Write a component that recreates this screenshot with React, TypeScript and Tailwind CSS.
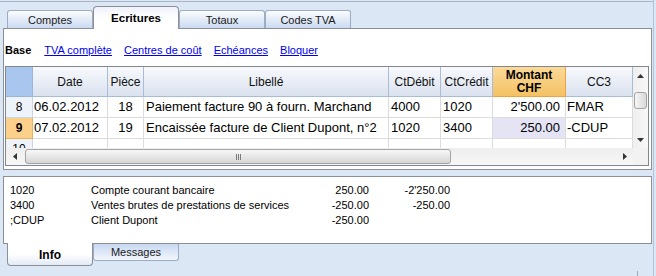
import React from "react";

const COLS = "grid grid-cols-[27px_75px_36px_245px_52px_52px_73px_67px]";

function Tri({ dir }: { dir: "up" | "down" | "left" | "right" }) {
  const pts =
    dir === "up"
      ? "0,4 7,4 3.5,0"
      : dir === "down"
      ? "0,0 7,0 3.5,4"
      : dir === "left"
      ? "4,0 4,7 0,3.5"
      : "0,0 0,7 4,3.5";
  const w = dir === "up" || dir === "down" ? 7 : 4;
  const h = dir === "up" || dir === "down" ? 4 : 7;
  return (
    <svg width={w} height={h} viewBox={`0 0 ${w} ${h}`}>
      <polygon points={pts} fill="#333" />
    </svg>
  );
}

function TopTab({ label, active }: { label: string; active?: boolean }) {
  if (active) {
    return (
      <div className="relative z-10 -mb-px flex h-[23px] w-[86px] items-start justify-center rounded-t-[4px] border border-b-0 border-[#8c8f96] bg-linear-to-b from-[#eef2fa] via-white to-white pt-[3px] text-[11.5px] font-bold text-black">
        {label}
      </div>
    );
  }
  return (
    <div className="flex h-[18px] w-[86px] items-center justify-center rounded-t-[3px] border border-b-0 border-[#9cacc4] bg-linear-to-b from-[#fbfcfe] to-[#cbdaf1] pt-[1px] text-[11px] text-[#1a1a1a]">
      {label}
    </div>
  );
}

function HeadCell({ children, className = "" }: { children?: React.ReactNode; className?: string }) {
  return (
    <div
      className={
        "flex items-center justify-center border-r border-b border-[#a7bcd7] bg-linear-to-b from-[#f8f9fc] to-[#dae2ef] text-[12px] text-[#111] " +
        className
      }
    >
      {children}
    </div>
  );
}

function Cell({ children, className = "" }: { children?: React.ReactNode; className?: string }) {
  return (
    <div className={"flex h-[21px] items-center overflow-hidden whitespace-nowrap border-r border-b border-[#dcdcdc] text-[13px] text-black " + className}>
      {children}
    </div>
  );
}

type Row = { n: string; date: string; piece: string; lib: string; deb: string; cred: string; mont: string; cc3: string };

const rows: Row[] = [
  { n: "8", date: "06.02.2012", piece: "18", lib: "Paiement facture 90 à fourn. Marchand", deb: "4000", cred: "1020", mont: "2'500.00", cc3: "FMAR" },
  { n: "9", date: "07.02.2012", piece: "19", lib: "Encaissée facture de Client Dupont, n°2", deb: "1020", cred: "3400", mont: "250.00", cc3: "-CDUP" },
];

function DataRow({ r, sel }: { r: Row; sel?: boolean }) {
  return (
    <>
      <div
        className={
          "flex h-[21px] items-center justify-center border-r border-b text-[12px] " +
          (sel ? "border-[#e8b25c] bg-[#fbd08b] font-bold" : "border-[#c9d6e8] bg-[#eef3fa]")
        }
      >
        {r.n}
      </div>
      <Cell className="pl-[1px]">{r.date}</Cell>
      <Cell className="justify-center">{r.piece}</Cell>
      <Cell className="pl-[2px]">{r.lib}</Cell>
      <Cell className="pl-[2px]">{r.deb}</Cell>
      <Cell className="pl-[2px]">{r.cred}</Cell>
      <Cell className={"justify-end pr-[5px] " + (sel ? "bg-[#e4e4f5]" : "")}>{r.mont}</Cell>
      <Cell className="pl-[1px]">{r.cc3}</Cell>
    </>
  );
}

export default function App() {
  return (
    <div className="h-[276px] w-[656px] overflow-hidden bg-[#dce7f5] font-['Liberation_Sans',Arial,sans-serif]">
      <div className="flex h-full w-[654px] flex-col border-r border-[#b3c4da]">
        <div className="h-px" />
        <div className="h-px bg-[#a9b5c6]" />
        {/* top tabs */}
        <div className="flex h-[26px] items-end pl-[7px]">
          <TopTab label="Comptes" />
          <TopTab label="Ecritures" active />
          <TopTab label="Totaux" />
          <TopTab label="Codes TVA" />
        </div>
        {/* main panel */}
        <div className="ml-[3px] flex h-[142px] w-[649px] flex-col border border-[#8c8f96] bg-white">
          <div className="flex h-[37px] items-center gap-[12px] pl-[1px] pt-[5px] text-[11px]">
            <span className="mr-px font-bold text-black">Base</span>
            <span className="text-[#0000ee] underline">TVA complète</span>
            <span className="text-[#0000ee] underline">Centres de coût</span>
            <span className="text-[#0000ee] underline">Echéances</span>
            <span className="text-[#0000ee] underline">Bloquer</span>
          </div>
          {/* grid */}
          <div className="ml-px flex h-[100px] w-[644px] flex-col border border-[#82878f]">
            <div className="flex h-[81px]">
              <div className="flex w-[627px] flex-col">
                <div className={COLS + " h-[30px]"}>
                  <div className="border-r border-b border-[#9db5d5] bg-[#a9c6ee]" />
                  <HeadCell>Date</HeadCell>
                  <HeadCell>Pièce</HeadCell>
                  <HeadCell>Libellé</HeadCell>
                  <HeadCell>CtDébit</HeadCell>
                  <HeadCell>CtCrédit</HeadCell>
                  <div className="flex flex-col items-center justify-center border-r border-b border-[#efa23e] bg-linear-to-b from-[#fbda97] to-[#f4c163] text-center text-[12px] font-bold leading-[13px] text-black">
                    <span>Montant</span>
                    <span>CHF</span>
                  </div>
                  <HeadCell>CC3</HeadCell>
                </div>
                <div className={COLS}>
                  <DataRow r={rows[0]} />
                  <DataRow r={rows[1]} sel />
                </div>
                <div className="h-[9px] overflow-hidden">
                  <div className={COLS}>
                    <div className="flex h-[21px] items-center justify-center border-r border-b border-[#c9d6e8] bg-[#eef3fa] text-[12px]">10</div>
                    <Cell />
                    <Cell />
                    <Cell />
                    <Cell />
                    <Cell />
                    <Cell />
                    <Cell />
                  </div>
                </div>
              </div>
              {/* vertical scrollbar */}
              <div className="flex w-[15px] flex-col bg-linear-to-r from-[#eeeeee] to-[#f8f8f8]">
                <div className="flex h-[17px] items-center justify-center">
                  <Tri dir="up" />
                </div>
                <div className="h-[8px]" />
                <div className="mx-px h-[17px] rounded-[3px] border border-[#a3a3a3] bg-linear-to-r from-[#f6f6f6] to-[#d9d9d9]" />
                <div className="flex-1" />
                <div className="flex h-[17px] items-center justify-center">
                  <Tri dir="down" />
                </div>
              </div>
            </div>
            {/* horizontal scrollbar */}
            <div className="flex h-[17px]">
              <div className="flex w-[627px] items-center bg-linear-to-b from-[#eeeeee] to-[#f7f7f7]">
                <div className="flex h-full w-[17px] items-center justify-center">
                  <Tri dir="left" />
                </div>
                <div className="ml-[2px] flex h-[15px] w-[426px] items-center justify-center rounded-[3px] border border-[#a3a3a3] bg-linear-to-b from-[#f8f8f8] to-[#d6d6d6]">
                  <div className="flex gap-[1px]">
                    <div className="h-[6px] w-px bg-[#7a7a7a]" />
                    <div className="h-[6px] w-px bg-[#7a7a7a]" />
                    <div className="h-[6px] w-px bg-[#7a7a7a]" />
                  </div>
                </div>
                <div className="flex-1" />
                <div className="flex h-full w-[17px] items-center justify-center">
                  <Tri dir="right" />
                </div>
              </div>
              <div className="w-[15px] bg-[#f2f2f2]" />
            </div>
          </div>
        </div>
        {/* info panel */}
        <div className="ml-[3px] mt-[6px] h-[68px] w-[649px] border border-[#8c8f96] bg-white pl-[6px] pt-[6px] text-[11px] leading-[15px] text-black">
          <div className="grid grid-cols-[81px_200px_78px_81px]">
            <span>1020</span>
            <span>Compte courant bancaire</span>
            <span className="text-right">250.00</span>
            <span className="text-right">-2'250.00</span>
            <span>3400</span>
            <span>Ventes brutes de prestations de services</span>
            <span className="text-right">-250.00</span>
            <span className="text-right">-250.00</span>
            <span>;CDUP</span>
            <span>Client Dupont</span>
            <span className="text-right">-250.00</span>
            <span />
          </div>
        </div>
        {/* bottom tabs */}
        <div className="-mt-px flex flex-1 items-start pl-[7px]">
          <div className="relative z-10 flex h-[23px] w-[86px] items-center justify-center rounded-b-[4px] border border-t-0 border-[#8c8f96] bg-linear-to-b from-white via-white to-[#e3eaf6] pt-[2px] text-[12px] font-bold text-black">
            Info
          </div>
          <div className="mt-px flex h-[17px] w-[86px] items-center justify-center rounded-b-[3px] border border-t-0 border-[#9cacc4] bg-linear-to-b from-[#c8d8f1] to-[#f2f6fc] text-[11px] text-[#1a1a1a]">
            Messages
          </div>
          <div className="ml-auto mr-[15px] mt-[28px] h-[5px] w-px bg-[#a3aab5]" />
        </div>
      </div>
    </div>
  );
}
